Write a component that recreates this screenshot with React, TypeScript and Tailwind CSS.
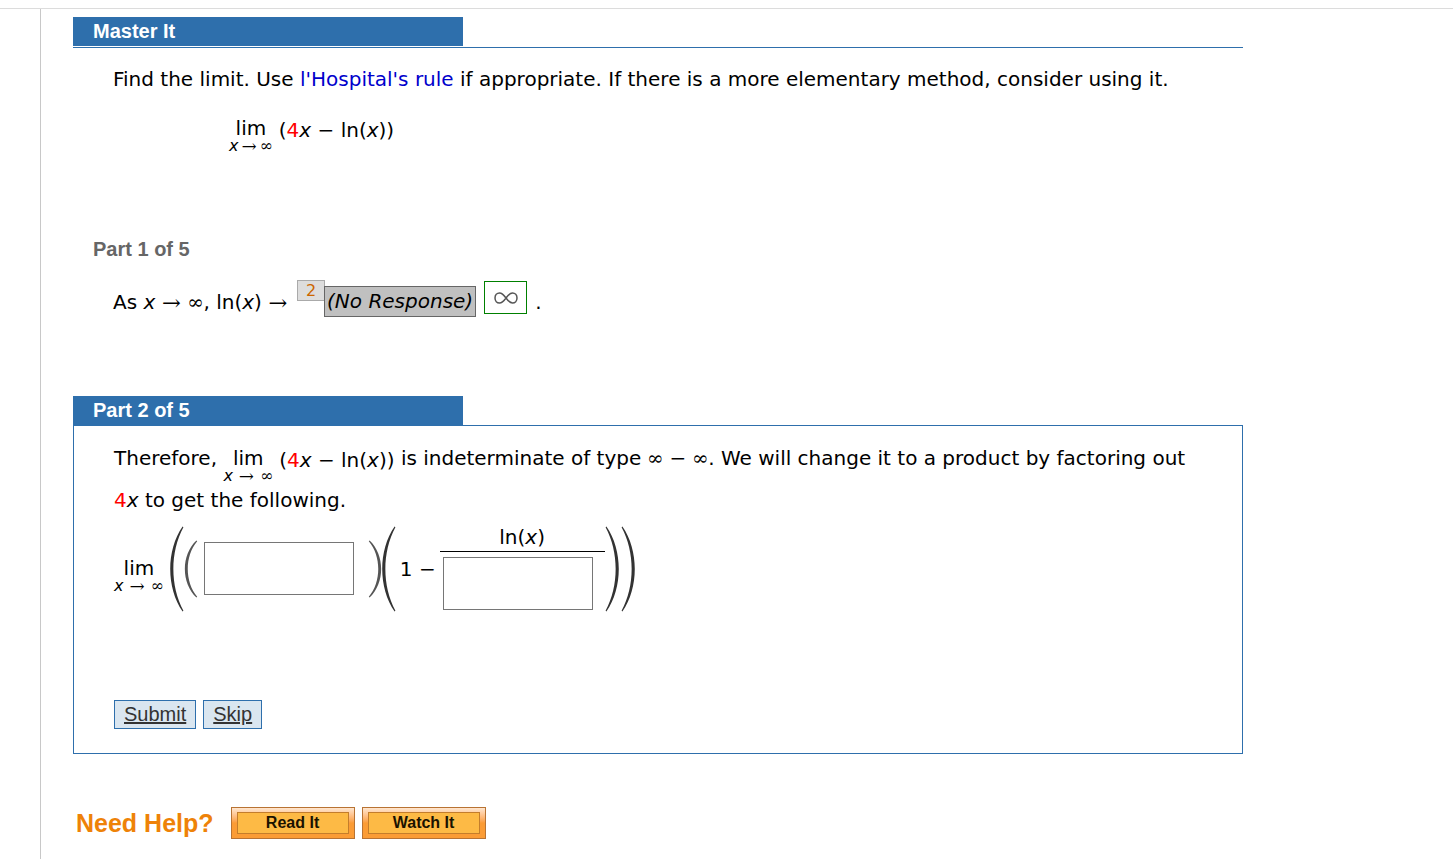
import type { ReactNode } from 'react';

function Sym({ children }: { children: ReactNode }) {
  return (
    <span className="font-['DejaVu_Math_TeX_Gyre','DejaVu_Sans_Light','DejaVu_Sans',serif] leading-none font-extralight">
      {children}
    </span>
  );
}

function Lim({ wide = false }: { wide?: boolean }) {
  return (
    <span className="inline-flex flex-col items-center">
      <span className="leading-5">lim</span>
      <span className={`flex items-center text-base leading-4 ${wide ? 'gap-1.5' : 'gap-[3px]'}`}>
        <i>x</i>
        <Sym>→</Sym>
        <Sym>∞</Sym>
      </span>
    </span>
  );
}

function LimitExpression({ wide = false }: { wide?: boolean }) {
  return (
    <span className="inline-flex items-start gap-1.5">
      <Lim wide={wide} />
      <span className="leading-6">
        (<span className="text-[#ff0000]">4</span>
        <i>x</i> − ln(<i>x</i>))
      </span>
    </span>
  );
}

interface ParenProps {
  side: 'left' | 'right';
  size: 'small' | 'large';
}

function Paren({ side, size }: ParenProps) {
  const flip = side === 'right' ? 'translate(14 0) scale(-1 1)' : undefined;
  return size === 'large' ? (
    <svg width="14" height="86" viewBox="0 0 14 86" className="shrink-0" aria-hidden="true">
      <path
        transform={flip}
        d="M12.600 0.500C-3.900 24-3.900 62 12.600 85.500L13.400 84.800C0 60 0 26 13.400 1.200Z"
        fill="#333"
      />
    </svg>
  ) : (
    <svg width="14" height="58" viewBox="0 0 14 58" className="shrink-0" aria-hidden="true">
      <path
        transform={flip}
        d="M12.400 0.500C-3 15-3 43 12.400 57.500L13.200 56.700C0.600 42 0.600 16 13.200 1.300Z"
        fill="#555"
      />
    </svg>
  );
}

function AnswerBox({ label }: { label: string }) {
  return (
    <input
      type="text"
      aria-label={label}
      className="h-[53px] w-[150px] border border-[#767676] bg-white px-2"
    />
  );
}

function SectionTab({ children }: { children: ReactNode }) {
  return (
    <h2 className="h-[29px] w-1/3 bg-[#2e6fac] px-5 font-['Liberation_Sans',sans-serif] text-xl leading-7 font-bold text-white">
      {children}
    </h2>
  );
}

function ActionButton({ children }: { children: ReactNode }) {
  return (
    <button type="button" className="border border-[#2e6fac] bg-[#dae6f0] px-[9px] leading-[27px] underline">
      {children}
    </button>
  );
}

function HelpButton({ children }: { children: ReactNode }) {
  return (
    <button
      type="button"
      className="h-8 w-[124px] border border-[#b87333] bg-linear-to-b from-[#ffe6cf] via-[#fb9c35] via-50% to-[#fb9c35] px-[5px] py-1 font-['Liberation_Sans',sans-serif] text-base font-bold text-[#1a1200]"
    >
      <span className="block border border-[#c47d2b] bg-[#fdba45] leading-5">{children}</span>
    </button>
  );
}

export default function App() {
  return (
    <div className="min-h-screen bg-white pt-2 font-['DejaVu_Sans',Verdana,sans-serif] text-xl text-black">
      <div className="border-t border-[#dcdcdc] pl-10">
        <main className="min-h-[850px] border-l border-[#c8c8c8] pt-2 pl-8">
          <div className="max-w-[1170px]">
            <section>
              <div className="border-b border-[#2e6fac] pb-px">
                <SectionTab>Master It</SectionTab>
              </div>
              <div className="px-10 pt-[15px]">
                <p className="leading-8">
                  Find the limit. Use{' '}
                  <a href="#lhospital" className="text-[#0000cc]">
                    l'Hospital's rule
                  </a>{' '}
                  if appropriate. If there is a more elementary method, consider using it.
                </p>
                <div className="flex pt-[23px] pl-[116px]">
                  <LimitExpression />
                </div>
              </div>
            </section>

            <section className="pt-[81px]">
              <h2 className="px-5 font-['Liberation_Sans',sans-serif] leading-7 font-bold text-[#666]">
                Part 1 of 5
              </h2>
              <div className="flex items-start px-10 pt-[17px]">
                <p className="pt-1.5 leading-8">
                  As <i>x</i> <Sym>→</Sym> <Sym>∞</Sym>, ln(<i>x</i>) <Sym>→</Sym>
                </p>
                <span className="ml-[9px] h-[21px] w-7 border border-[#aaa] bg-[#ddd] text-center text-base leading-5 text-[#cc6600]">
                  2
                </span>
                <i className="mt-1.5 -ml-px border border-[#666] bg-[#c0c0c0] px-0.5 leading-[29px]">
                  (No Response)
                </i>
                <span className="mt-px ml-2 flex h-[33px] w-[43px] items-center justify-center border border-[#008000]">
                  <svg width="24" height="12" viewBox="0 0 24 12" fill="none" stroke="#555" role="img" aria-label="infinity">
                    <path
                      strokeWidth="1.5"
                      d="M12 6C9.500 2.500 8 1 5.500 1S1 3 1 6s2 5 4.500 5S9.500 9.500 12 6s4-5 6.500-5S23 3 23 6s-2 5-4.500 5S14.500 9.500 12 6Z"
                    />
                  </svg>
                </span>
                <span className="ml-2 pt-1.5 leading-8">.</span>
              </div>
            </section>

            <section className="pt-[78px]">
              <SectionTab>Part 2 of 5</SectionTab>
              <div className="border border-[#2e6fac] px-10 pt-4 pb-6">
                <p className="leading-8">
                  Therefore, <LimitExpression wide /> is indeterminate of type <Sym>∞</Sym> −{' '}
                  <Sym>∞</Sym>. We will change it to a product by factoring out{' '}
                  <span className="text-[#ff0000]">4</span>
                  <i>x</i> to get the following.
                </p>
                <div className="flex items-center pt-[7px]">
                  <span className="pt-2.5 pr-1.5">
                    <Lim wide />
                  </span>
                  <Paren side="left" size="large" />
                  <Paren side="left" size="small" />
                  <span className="flex pr-3.5 pl-1.5">
                    <AnswerBox label="First factor" />
                  </span>
                  <Paren side="right" size="small" />
                  <Paren side="left" size="large" />
                  <span className="px-1">1 −</span>
                  <span className="flex flex-col items-center pb-1">
                    <span className="leading-7">
                      ln(<i>x</i>)
                    </span>
                    <span className="border-t border-black pt-[5px] pr-3 pl-[3px]">
                      <span className="flex">
                        <AnswerBox label="Denominator" />
                      </span>
                    </span>
                  </span>
                  <span className="flex gap-0.5">
                    <Paren side="right" size="large" />
                    <Paren side="right" size="large" />
                  </span>
                </div>
                <div className="flex gap-[7px] pt-[86px] font-['Liberation_Sans',sans-serif] text-[#333]">
                  <ActionButton>Submit</ActionButton>
                  <ActionButton>Skip</ActionButton>
                </div>
              </div>
            </section>

            <div className="flex items-center gap-[7px] pt-[53px]">
              <span className="pr-2.5 pl-[3px] font-['Liberation_Sans',sans-serif] text-[25px] leading-8 font-bold text-[#ee8208]">
                Need Help?
              </span>
              <HelpButton>Read It</HelpButton>
              <HelpButton>Watch It</HelpButton>
            </div>
          </div>
        </main>
      </div>
    </div>
  );
}
